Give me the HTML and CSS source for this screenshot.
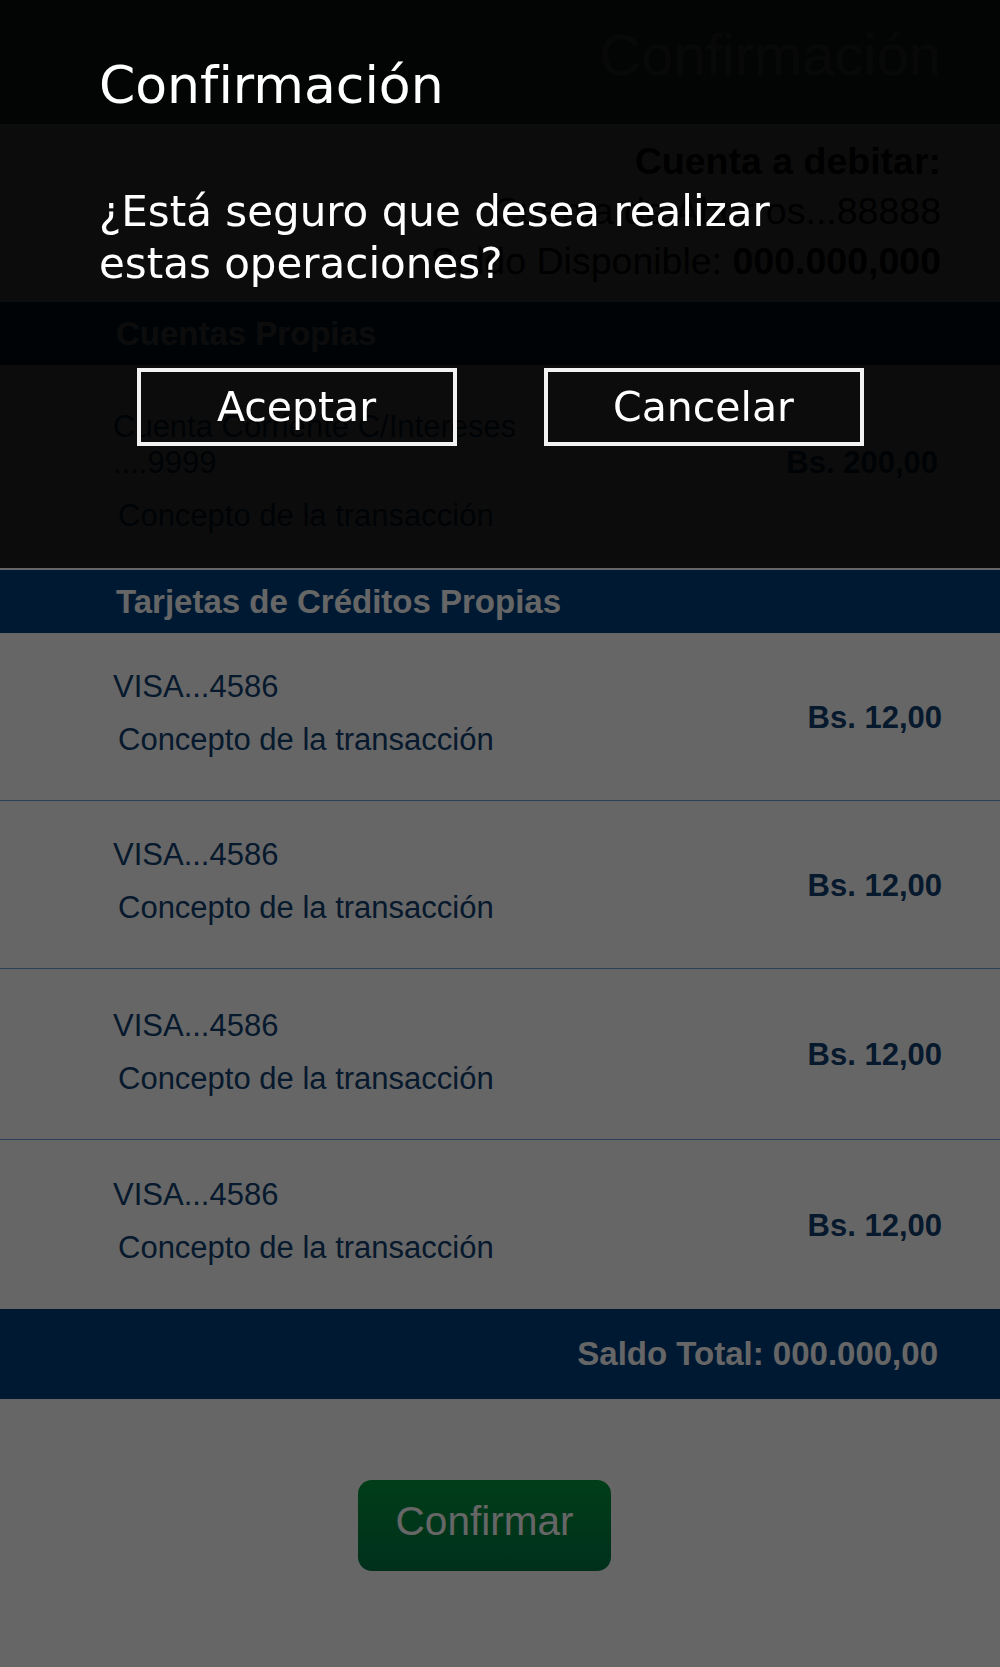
FILE: index.html
```html
<!DOCTYPE html>
<html lang="es">
<head>
<meta charset="utf-8">
<title>Confirmación</title>
<link rel="stylesheet" href="styles.css">
</head>
<body>
<div class="page">
  <header class="topbar"><h1>Confirmación</h1></header>
  <section class="account">
    <p class="acc-label">Cuenta a debitar:</p>
    <p>Cuenta de Ahorros...88888</p>
    <p>Saldo Disponible: <b>000.000,000</b></p>
  </section>
  <div class="band">Cuentas Propias</div>
  <div class="row row-wrap">
    <div class="row-left">
      <div class="row-title">Cuenta Corriente C/Intereses ....9999</div>
      <div class="row-concept">Concepto de la transacción</div>
    </div>
    <div class="row-amount">Bs. 200,00</div>
  </div>
  <div class="band">Tarjetas de Créditos Propias</div>
  <div class="row">
    <div class="row-left">
      <div class="row-title">VISA...4586</div>
      <div class="row-concept">Concepto de la transacción</div>
    </div>
    <div class="row-amount">Bs. 12,00</div>
  </div>
  <div class="row">
    <div class="row-left">
      <div class="row-title">VISA...4586</div>
      <div class="row-concept">Concepto de la transacción</div>
    </div>
    <div class="row-amount">Bs. 12,00</div>
  </div>
  <div class="row row-loose">
    <div class="row-left">
      <div class="row-title">VISA...4586</div>
      <div class="row-concept">Concepto de la transacción</div>
    </div>
    <div class="row-amount">Bs. 12,00</div>
  </div>
  <div class="row row-last">
    <div class="row-left">
      <div class="row-title">VISA...4586</div>
      <div class="row-concept">Concepto de la transacción</div>
    </div>
    <div class="row-amount">Bs. 12,00</div>
  </div>
  <div class="total">Saldo Total: 000.000,00</div>
  <div class="actions"><button class="confirm" type="button">Confirmar</button></div>
</div>

<div class="overlay"></div>

<div class="dialog" role="dialog">
  <h2 class="dialog-title">Confirmación</h2>
  <p class="dialog-msg">¿Está seguro que desea realizar estas operaciones?</p>
  <div class="dialog-buttons">
    <button class="dialog-btn" type="button">Aceptar</button>
    <button class="dialog-btn" type="button">Cancelar</button>
  </div>
</div>
</body>
</html>
```
FILE: styles.css
```css
html, body {
  margin: 0;
  padding: 0;
}

body {
  background: #ffffff;
  font-family: "Liberation Sans", Arial, sans-serif;
  width: 1000px;
  height: 1667px;
  overflow: hidden;
}

.page {
  width: 1000px;
}

/* header */
.topbar {
  height: 124px;
  box-sizing: border-box;
  padding: 22px 59px 0 0;
  background: #3e6868;
  text-align: right;
}

.topbar h1 {
  margin: 0;
  font-size: 58px;
  font-weight: normal;
  line-height: 66px;
  color: #b0b0b0;
}

/* account to debit */
.account {
  padding: 12px 59px 16px 0;
  text-align: right;
  color: #000000;
  font-size: 37.5px;
  line-height: 50px;
}

.account p {
  margin: 0;
}

.acc-label {
  font-weight: bold;
}

/* section bands */
.band {
  height: 63px;
  box-sizing: border-box;
  display: flex;
  align-items: center;
  padding-left: 116px;
  background: #004080;
  color: #ffffff;
  font-weight: bold;
  font-size: 33px;
}

/* rows */
.row {
  display: flex;
  align-items: center;
  justify-content: space-between;
  padding: 0 58px 0 113px;
  border-bottom: 1px solid #6c9fdc;
  color: #104070;
  font-size: 31px;
}

.row-left {
  width: 460px;
  padding: 36px 0 42px;
}

.row-title {
  line-height: 36px;
}

.row-concept {
  margin-top: 17px;
  margin-left: 5px;
  line-height: 36px;
}

.row-amount {
  font-weight: bold;
  line-height: 36px;
  margin-top: 2px;
}

.row-wrap {
  border-bottom: none;
  margin-bottom: 2px;
}

.row-wrap .row-left {
  padding: 44px 0 34px;
}

.row-wrap .row-amount {
  margin-top: -8px;
  margin-right: 4px;
}

.row-loose .row-left {
  padding-top: 39px;
}

.row-last {
  border-bottom: none;
  height: 169px;
  box-sizing: border-box;
}

/* total */
.total {
  height: 90px;
  box-sizing: border-box;
  display: flex;
  align-items: center;
  justify-content: flex-end;
  padding-right: 62px;
  background: #004080;
  color: #ffffff;
  font-weight: bold;
  font-size: 33px;
}

.actions {
  display: flex;
  padding: 81px 0 0 358px;
}

.confirm {
  width: 253px;
  height: 91px;
  border: none;
  border-radius: 14px;
  background: linear-gradient(#009a3e, #007846);
  color: #ffffff;
  font-family: "Liberation Sans", Arial, sans-serif;
  font-size: 40.5px;
  padding: 0 0 9px;
}

/* modal */
.overlay {
  position: fixed;
  left: 0;
  top: 0;
  width: 1000px;
  height: 1667px;
  background: rgba(0, 0, 0, 0.6);
}

.dialog {
  position: fixed;
  left: 0;
  top: 0;
  width: 1000px;
  height: 568px;
  box-sizing: border-box;
  padding: 55px 0 0 99px;
  background: rgba(0, 0, 0, 0.88);
  color: #ffffff;
  font-family: "DejaVu Sans", Verdana, sans-serif;
}

.dialog-title {
  margin: 0;
  font-size: 52px;
  font-weight: normal;
  line-height: normal;
}

.dialog-msg {
  margin: 71px 0 0;
  width: 720px;
  font-size: 42px;
  line-height: 52px;
}

.dialog-buttons {
  display: flex;
  justify-content: center;
  gap: 87px;
  margin: 78px 0 0 -99px;
}

.dialog-btn {
  width: 320px;
  height: 78px;
  box-sizing: border-box;
  border: 4px solid #f2f2f2;
  background: transparent;
  color: #ffffff;
  font-family: "DejaVu Sans", Verdana, sans-serif;
  font-size: 41px;
  padding: 0;
}
```
